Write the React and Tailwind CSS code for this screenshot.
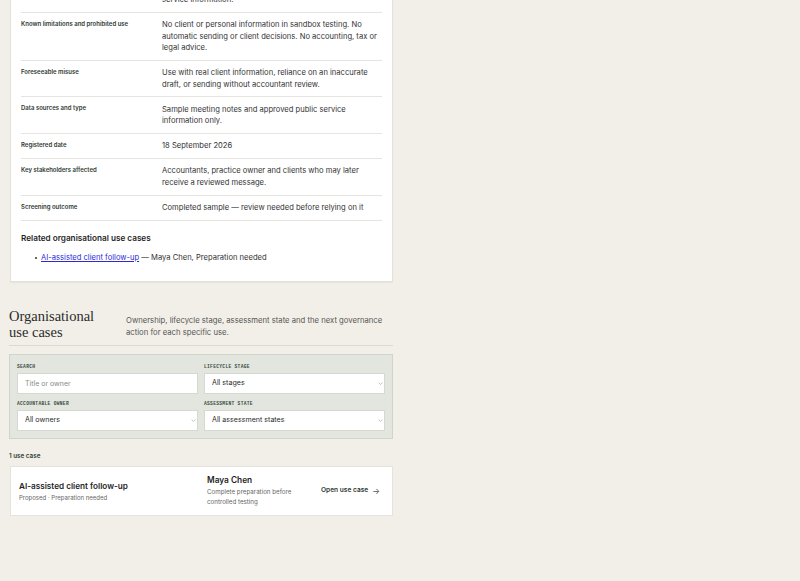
import React from "react";

const rows = [
  ["Known limitations and prohibited use", "No client or personal information in sandbox testing. No automatic sending or client decisions. No accounting, tax or legal advice."],
  ["Foreseeable misuse", "Use with real client information, reliance on an inaccurate draft, or sending without accountant review."],
  ["Data sources and type", "Sample meeting notes and approved public service information only."],
  ["Registered date", "18 September 2026"],
  ["Key stakeholders affected", "Accountants, practice owner and clients who may later receive a reviewed message."],
  ["Screening outcome", "Completed sample — review needed before relying on it"],
];

function Chevron() {
  return (
    <svg width="5" height="3" viewBox="0 0 6 4" className="text-[#9a9a9a]">
      <path d="M0.5 0.8 L3 3.2 L5.5 0.8" fill="none" stroke="currentColor" strokeWidth="0.8" />
    </svg>
  );
}

export default function App() {
  return (
    <div
      className="h-[581px] w-[800px] overflow-hidden bg-[#f2efe8] text-[#2b2b2b]"
      style={{ fontFamily: "Inter, 'Noto Sans', sans-serif" }}
    >
      <div className="ml-[9px] w-[384px]">
        {/* Top card */}
        <div className="-mt-[20px] ml-[1px] w-[383px] border border-[#e4e1da] bg-white px-[10px] pb-[17px] shadow-[0_1px_1px_rgba(0,0,0,0.04)]">
          <div className="grid grid-cols-[141px_1fr] border-b border-[#e6e4df] pt-[13px] pb-[6.3px]">
            <div />
            <div className="text-[7.6px] leading-[11.5px] text-[#333]">service information.</div>
          </div>
          {rows.map(([k, v]) => (
            <div key={k} className="grid grid-cols-[141px_1fr] border-b border-[#e6e4df] py-[6.3px]">
              <div className="pt-[0.5px] text-[6px] font-semibold leading-[8px] text-[#2f3b33]">{k}</div>
              <div className="text-[7.6px] leading-[11.5px] text-[#333]">{v}</div>
            </div>
          ))}
          <div className="mt-[11px] text-[8.2px] font-semibold leading-[12px] text-[#1f1f1f]">
            Related organisational use cases
          </div>
          <ul className="mt-[8px] pl-[14px] text-[7.6px] leading-[12px] text-[#333]">
            <li className="flex items-center gap-[4px]">
              <span className="h-[2px] w-[2px] rounded-full bg-[#333]" />
              <span>
                <a className="text-[#2b2bd6] underline">AI-assisted client follow-up</a> — Maya Chen, Preparation needed
              </span>
            </li>
          </ul>
        </div>

        {/* Section heading */}
        <div className="mt-[27px] grid grid-cols-[117px_1fr] border-b border-[#dcd9d1] pb-[5px]">
          <h2
            className="text-[14.5px] leading-[15.7px] text-[#2b2b2b]"
            style={{ fontFamily: "'Liberation Serif', 'DejaVu Serif', serif" }}
          >
            Organisational
            <br />
            use cases
          </h2>
          <p className="pt-[6px] text-[7.7px] leading-[12px] text-[#555]">
            Ownership, lifecycle stage, assessment state and the next governance action for each specific use.
          </p>
        </div>

        {/* Filters */}
        <div className="mt-[8px] border border-[#d0d4cb] bg-[#e3e6df] px-[7px] pt-[9px] pb-[7px]">
          <div className="grid grid-cols-2 gap-x-[6px] gap-y-[7px]">
            {[
              ["SEARCH", "Title or owner", true],
              ["LIFECYCLE STAGE", "All stages", false],
              ["ACCOUNTABLE OWNER", "All owners", false],
              ["ASSESSMENT STATE", "All assessment states", false],
            ].map(([label, val, input]) => (
              <div key={label}>
                <div
                  className="text-[4.6px] font-bold leading-[6px] tracking-[0.3px] text-[#3b4a3f]"
                  style={{ fontFamily: "'Liberation Mono', 'DejaVu Sans Mono', monospace" }}
                >
                  {label}
                </div>
                <div className="mt-[3px] flex h-[21px] items-center justify-between border border-[#d6d8d2] bg-white pr-[1.5px] pl-[7px]">
                  <span className={input ? "text-[7px] text-[#8a8a8a]" : "text-[7.1px] text-[#2b2b2b]"}>{val}</span>
                  {!input && <Chevron />}
                </div>
              </div>
            ))}
          </div>
        </div>

        {/* Count */}
        <div className="mt-[13px] text-[6.3px] font-semibold leading-[8px] text-[#2f3b33]">1 use case</div>

        {/* Use case card */}
        <div className="mt-[6px] ml-[1px] grid h-[50px] w-[383px] grid-cols-[188px_114px_1fr] items-center border border-[#e6e3dc] bg-white pl-[8px] pr-[15px]">
          <div>
            <div className="text-[8.2px] font-semibold leading-[11px] text-[#1f1f1f]">AI-assisted client follow-up</div>
            <div className="mt-[2px] text-[6px] leading-[8px] text-[#666]">Proposed · Preparation needed</div>
          </div>
          <div>
            <div className="text-[8.3px] font-semibold leading-[11px] text-[#1f1f1f]">Maya Chen</div>
            <div className="mt-[1px] text-[6.2px] leading-[10px] text-[#666]">
              Complete preparation before
              <br />
              controlled testing
            </div>
          </div>
          <div className="flex items-center gap-[4px] whitespace-nowrap text-[6.6px] font-semibold text-[#2f3b33]">
            <span>Open use case</span>
            <span className="text-[8px] font-normal text-[#555]">→</span>
          </div>
        </div>
      </div>
    </div>
  );
}
